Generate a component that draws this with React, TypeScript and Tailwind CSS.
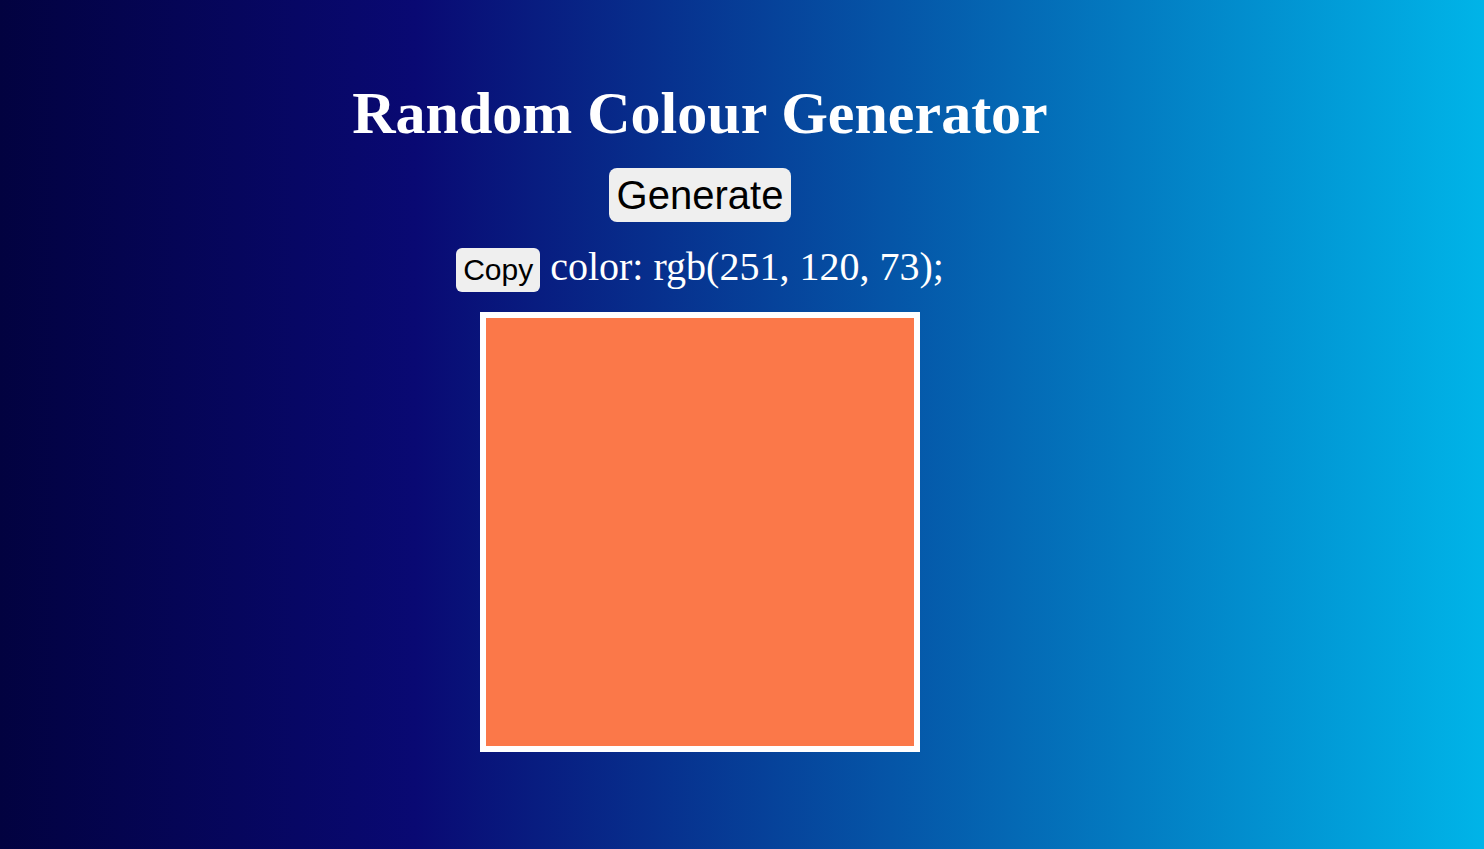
import { useState } from "react";

const serif = { fontFamily: '"Liberation Serif", "Times New Roman", serif' };
const sans = { fontFamily: '"Liberation Sans", Arial, sans-serif' };

export default function App() {
  const [rgb, setRgb] = useState<[number, number, number]>([251, 120, 73]);
  const colour = `rgb(${rgb[0]}, ${rgb[1]}, ${rgb[2]})`;

  const generate = () => {
    const r = () => Math.floor(Math.random() * 256);
    setRgb([r(), r(), r()]);
  };

  const copy = () => {
    navigator.clipboard?.writeText(`color: ${colour};`).catch(() => {});
  };

  return (
    <div className="min-h-[849px] w-full bg-[linear-gradient(90deg,#020240_0%,#090973_28%,#00b4e8_100%)] text-white">
      <div className="w-[1400px] flex flex-col items-center pt-[80px]" style={serif}>
        <h1 className="text-[60px] leading-[66px] font-bold">Random Colour Generator</h1>

        {/* Generate */}
        <button
          onClick={generate}
          className="mt-[22px] h-[54px] px-2 rounded-lg bg-[#efefef] text-black text-[40px] leading-[46px]"
          style={sans}
        >
          Generate
        </button>

        {/* Copy row */}
        <div className="mt-[23px] flex items-baseline gap-[10px]">
          <button
            onClick={copy}
            className="h-[44px] px-[7px] rounded-md bg-[#efefef] text-black text-[30px] leading-[34px]"
            style={sans}
          >
            Copy
          </button>
          <span className="text-[40px] leading-[44px]">color: {colour};</span>
        </div>

        {/* Swatch */}
        <div className="mt-[20px] w-[440px] h-[440px] border-[6px] border-white" style={{ backgroundColor: colour }} />
      </div>
    </div>
  );
}
